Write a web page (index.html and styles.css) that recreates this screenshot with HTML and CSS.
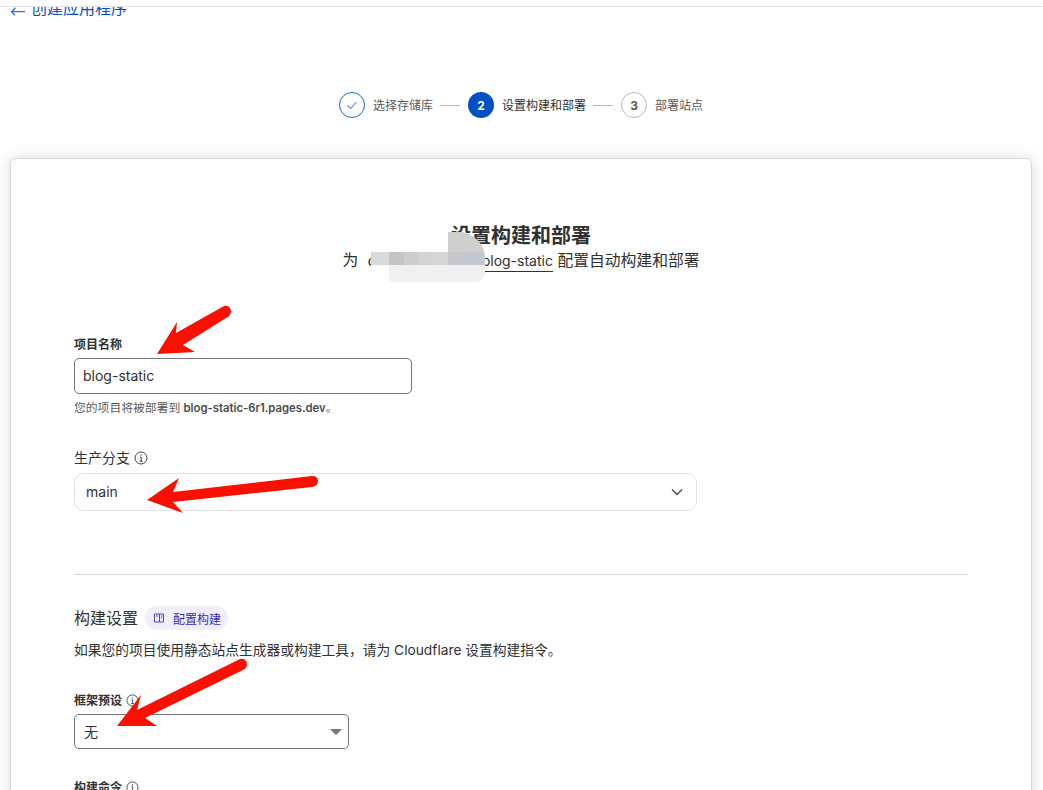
FILE: index.html
```html
<!DOCTYPE html>
<html lang="zh-CN">
<head>
<meta charset="utf-8">
<title>设置构建和部署</title>
<link rel="stylesheet" href="styles.css">
</head>
<body>
<div class="topbar"></div>
<main class="viewport">
  <a class="back" href="#">
    <svg class="back-icon" width="16" height="16" viewBox="0 0 16 16"><path d="M15 11.700H1.500M5.500 7.700 1.500 11.700 5 15.200" fill="none" stroke="#2f6fd0" stroke-width="1.300"/></svg>
    <span>创建应用程序</span>
  </a>
  <ol class="stepper">
    <li class="step done">
      <span class="dot"><svg width="12" height="12" viewBox="0 0 12 12"><path d="M1.500 6.500 4.700 9.500 10.500 3" fill="none" stroke="#5b84c4" stroke-width="1.100"/></svg></span>
      <span class="step-label">选择存储库</span>
    </li>
    <li class="line"></li>
    <li class="step current">
      <span class="dot">2</span>
      <span class="step-label">设置构建和部署</span>
    </li>
    <li class="line"></li>
    <li class="step next">
      <span class="dot">3</span>
      <span class="step-label">部署站点</span>
    </li>
  </ol>
  <section class="card">
    <h1 class="title">设置构建和部署</h1>
    <p class="subtitle">为 <a class="repo" href="#"><span class="owner">c000000000000</span><span class="repo-name">blog-static</span></a> 配置自动构建和部署</p>

    <div class="field field-name">
      <label class="label">项目名称</label>
      <div class="input">blog-static</div>
      <p class="help">您的项目将被部署到 <b>blog-static-6r1.pages.dev</b>。</p>
    </div>

    <div class="field field-branch">
      <label class="label-plain">生产分支
        <svg class="info" width="14" height="14" viewBox="0 0 14 14"><circle cx="7" cy="7" r="6" fill="none" stroke="#444" stroke-width="1"/><path d="M5.800 6.200H7.200V10.200M5.600 10.300H8.600M7 3.400V4.800" fill="none" stroke="#444" stroke-width="1"/></svg>
      </label>
      <div class="branch-select">
        <span class="value">main</span>
        <svg width="12" height="8" viewBox="0 0 12 8"><path d="M1 1.500 6 6.500 11 1.500" fill="none" stroke="#444" stroke-width="1.300"/></svg>
      </div>
    </div>

    <hr class="divider">

    <div class="build-head">
      <h2 class="build-title">构建设置</h2>
      <a class="pill" href="#">
        <svg width="12" height="12" viewBox="0 0 12 12"><path d="M1.500 2H10.500V10H1.500ZM6.500 2V10M8 4H9.300M8 6H9.300M3 4H5" fill="none" stroke="#4f46c8" stroke-width="1"/></svg>
        <span>配置构建</span>
      </a>
    </div>
    <p class="build-desc">如果您的项目使用静态站点生成器或构建工具，请为 Cloudflare 设置构建指令。</p>

    <div class="field field-preset">
      <label class="label">框架预设
        <svg class="info-small" width="13" height="13" viewBox="0 0 14 14"><circle cx="7" cy="7" r="6" fill="none" stroke="#444" stroke-width="1"/><path d="M5.800 6.200H7.200V10.200M5.600 10.300H8.600M7 3.400V4.800" fill="none" stroke="#444" stroke-width="1"/></svg>
      </label>
      <div class="preset-select"><span class="value">无</span><i class="caret"></i></div>
    </div>

    <div class="field field-command">
      <label class="label">构建命令
        <svg class="info-small" width="13" height="13" viewBox="0 0 14 14"><circle cx="7" cy="7" r="6" fill="none" stroke="#444" stroke-width="1"/><path d="M5.800 6.200H7.200V10.200M5.600 10.300H8.600M7 3.400V4.800" fill="none" stroke="#444" stroke-width="1"/></svg>
      </label>
    </div>
  </section>
</main>

<svg class="overlay" width="1043" height="790" viewBox="0 0 1043 790">
  <defs>
    <clipPath id="smudge"><path d="M448 232H462Q485 238 485 260V270Q485 279 476 282H389V269H371V252H448Z"/></clipPath>
  </defs>
  <g clip-path="url(#smudge)">
    <rect x="360" y="228" width="130" height="60" fill="#cfcfcd"/>
    <rect x="389" y="265" width="97" height="17" fill="#f0f0f0"/>
    <rect x="371" y="265" width="18" height="4" fill="#ffffff"/>
    <rect x="371" y="252" width="18" height="13" fill="#dadada"/>
    <rect x="389" y="252" width="15" height="13" fill="#c4c4c4"/>
    <rect x="404" y="252" width="14" height="13" fill="#cfcdca"/>
    <rect x="418" y="252" width="15" height="13" fill="#d2d4d8"/>
    <rect x="433" y="252" width="15" height="13" fill="#d6d6d4"/>
    <rect x="448" y="252" width="15" height="13" fill="#c6c8cc"/>
    <rect x="463" y="252" width="23" height="13" fill="#c3c7d0"/>
  </g>
  <g fill="#fb0f00">
    <path d="M157 354 177 322 176 333 224 306Q230 305 231 311 231 316 226 318L183 345 195 352Z"/>
    <path d="M147 500 179 478 173 492 312 476Q318 476 318 481 318 486 312 487L173 502 183 513Z"/>
    <path d="M117 726 141 695 137 710 240 659Q246 658 247 664 247 668 243 670L145 718 157 726Z"/>
  </g>
</svg>
</body>
</html>
```
FILE: styles.css
```css
* { box-sizing: border-box; }
html, body { margin: 0; height: 790px; overflow: hidden; background: #fff; }
body {
  font-family: "Inter", "Noto Sans CJK SC", sans-serif;
  color: #313131;
  position: relative;
}
.topbar { height: 7px; background: #fff; border-bottom: 1px solid #e4e4e4; position: relative; z-index: 1; }
.viewport { padding: 0 11px 0 10px; }
.back {
  display: flex; align-items: center; gap: 5px; height: 20px; margin-top: -9px;
  color: #0a4fc0; text-decoration: none; font-size: 16px; line-height: 20px;
}
.back-icon { flex: none; }
.stepper {
  list-style: none; margin: 74px 0 0; padding: 0; height: 26px;
  display: flex; align-items: center; justify-content: center;
}
.step { display: flex; align-items: center; gap: 8px; font-size: 12px; color: #595959; }
.step-label { padding-bottom: 2px; }
.dot {
  width: 26px; height: 26px; border-radius: 50%;
  display: flex; align-items: center; justify-content: center;
  font-size: 12px; font-weight: 700;
}
.done .dot { border: 1px solid #1f62cc; }
.current .dot { background: #0051c3; color: #fff; }
.current .step-label { color: #313131; }
.next .dot { border: 1px solid #b9b9b9; color: #595959; }
.line { width: 20px; height: 1px; background: #b5b5b5; margin: 0 8px 0 7px; }
.card {
  margin-top: 40px; height: 800px; background: #fff;
  border-radius: 6px; border: 1px solid #d8d8d8;
  box-shadow: 0 0 16px rgba(0,0,0,.14);
  padding: 0 63px;
}
.title { margin: 65px 0 0; font-size: 20px; line-height: 25px; font-weight: 700; text-align: center; color: #313131; }
.subtitle { margin: 0; font-size: 15.800px; line-height: 24px; text-align: center; color: #313131; white-space: nowrap; }
.repo { color: #313131; text-decoration: none; font-size: 14px; margin-left: 5px; }
.repo-name { border-bottom: 1px solid #313131; padding-bottom: 2px; }
.owner { color: #222; }
.field { display: block; }
.label { display: block; font-size: 12px; line-height: 16px; font-weight: 600; color: #313131; }
.label-plain { display: block; font-size: 14px; line-height: 18px; color: #313131; }
.info { vertical-align: -2px; }
.info-small { vertical-align: -2px; margin-left: 1px; }
.value { padding-bottom: 2px; }
.field-name { margin-top: 64px; }
.input {
  margin-top: 5px; width: 338px; height: 36px; border: 1px solid #777; border-radius: 5px;
  padding: 0 8px; font-size: 14px; line-height: 34px; color: #313131; background: #fff;
}
.help { margin: 5px 0 0; font-size: 11.800px; line-height: 18px; color: #595959; }
.help b { font-weight: 600; font-size: 11.300px; color: #4a4a4a; }
.field-branch { margin-top: 32px; }
.branch-select {
  margin-top: 6px; width: 623px; height: 38px; border: 1px solid #e2e2e2; border-radius: 10px;
  padding: 0 13px 0 11px; display: flex; align-items: center; justify-content: space-between;
  font-size: 14px; color: #313131;
}
.divider { margin: 63px 0 0; border: 0; border-top: 1px solid #d9d9d9; height: 1px; }
.build-head { display: flex; align-items: center; gap: 7px; margin-top: 31px; height: 24px; }
.build-title { margin: 0; font-size: 16px; line-height: 24px; font-weight: 400; color: #313131; }
.pill {
  display: flex; align-items: center; gap: 8px; height: 24px; padding: 0 7px 0 8px;
  border-radius: 12px; background: #f0eefb; color: #3b2bb0; text-decoration: none; font-size: 12px;
}
.build-desc { margin: 10px 0 0; font-size: 13.750px; line-height: 20px; color: #313131; white-space: nowrap; }
.field-preset { margin-top: 33px; }
.preset-select {
  margin-top: 5px; width: 275px; height: 35px; border: 1px solid #777; border-radius: 5px;
  padding: 0 6px 0 9px; display: flex; align-items: center; justify-content: space-between;
  font-size: 14px; color: #313131;
}
.caret { width: 0; height: 0; border-left: 6px solid transparent; border-right: 6px solid transparent; border-top: 6px solid #777; }
.field-command { margin-top: 31px; }
.overlay { position: absolute; left: 0; top: 0; pointer-events: none; }
```
